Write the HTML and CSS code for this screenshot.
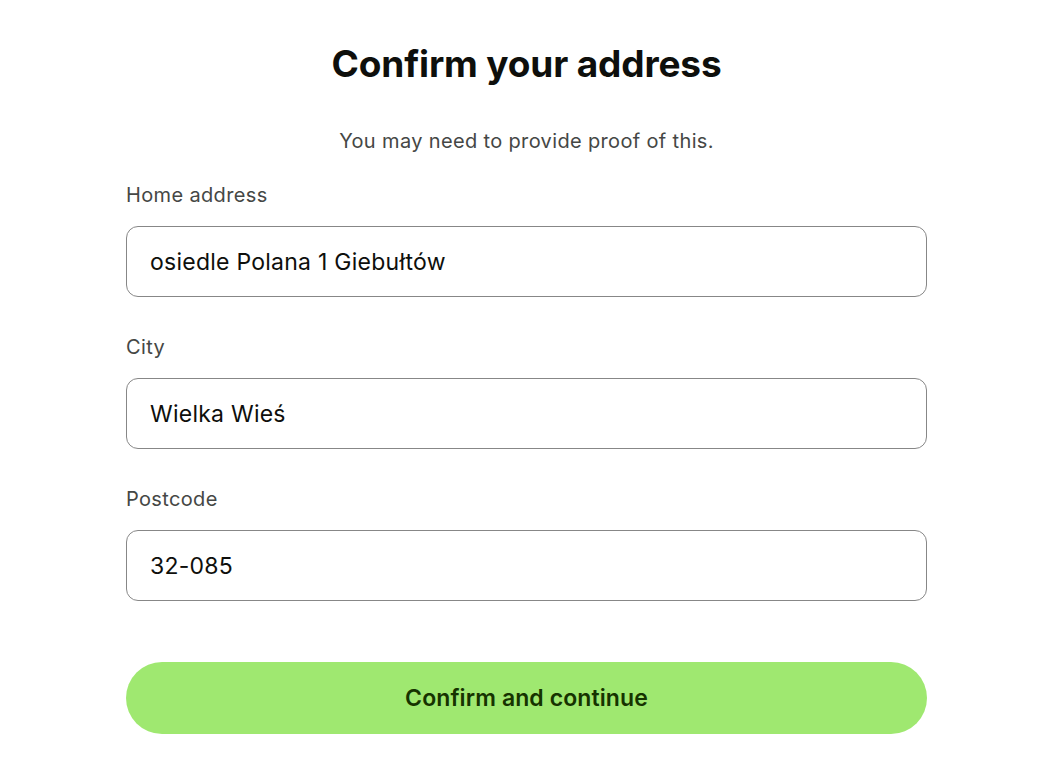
FILE: index.html
```html
<!DOCTYPE html>
<html lang="en">
<head>
<meta charset="utf-8">
<title>Confirm your address</title>
<link rel="stylesheet" href="styles.css">
</head>
<body>
<main class="page">
  <h1 class="title">Confirm your address</h1>
  <p class="subtitle">You may need to provide proof of this.</p>
  <form class="form">
    <div class="field">
      <label class="label" for="addr">Home address</label>
      <input class="input" id="addr" type="text" value="osiedle Polana 1 Giebułtów">
    </div>
    <div class="field">
      <label class="label" for="city">City</label>
      <input class="input" id="city" type="text" value="Wielka Wieś">
    </div>
    <div class="field">
      <label class="label" for="post">Postcode</label>
      <input class="input" id="post" type="text" value="32-085">
    </div>
    <button class="button" type="button">Confirm and continue</button>
  </form>
</main>
</body>
</html>
```
FILE: styles.css
```css
* { box-sizing: border-box; }
html, body { margin: 0; padding: 0; background: #fff; }
body {
  font-family: Inter, "Noto Sans", sans-serif;
  color: #0e0f0c;
  padding-right: 3px;
}
.page {
  width: 801px;
  margin: 0 auto;
  padding-top: 40px;
  display: flex;
  flex-direction: column;
}
.title {
  margin: 0;
  text-align: center;
  font-size: 37px;
  font-weight: 700;
  line-height: 48px;
  letter-spacing: -0.15px;
  color: #0e0f0c;
}
.subtitle {
  margin: 41px 0 0;
  text-align: center;
  font-size: 20px;
  line-height: 24px;
  letter-spacing: 0.35px;
  color: #454745;
}
.form {
  margin-top: 30px;
  display: flex;
  flex-direction: column;
}
.field {
  display: flex;
  flex-direction: column;
  margin-bottom: 38px;
}
.label {
  font-size: 20px;
  line-height: 24px;
  letter-spacing: 0.35px;
  color: #454745;
  margin-bottom: 19px;
}
.input {
  height: 71px;
  border: 1.5px solid #878787;
  border-radius: 12px;
  padding: 0 23px;
  font-family: Inter, "Noto Sans", sans-serif;
  font-size: 23px;
  letter-spacing: 0.25px;
  color: #0e0f0c;
  background: #fff;
  outline: none;
}
.button {
  margin-top: 23px;
  height: 72px;
  border: none;
  border-radius: 36px;
  background: #9fe870;
  color: #163300;
  font-family: Inter, "Noto Sans", sans-serif;
  font-size: 23px;
  font-weight: 600;
  letter-spacing: 0.1px;
  cursor: pointer;
}
```
